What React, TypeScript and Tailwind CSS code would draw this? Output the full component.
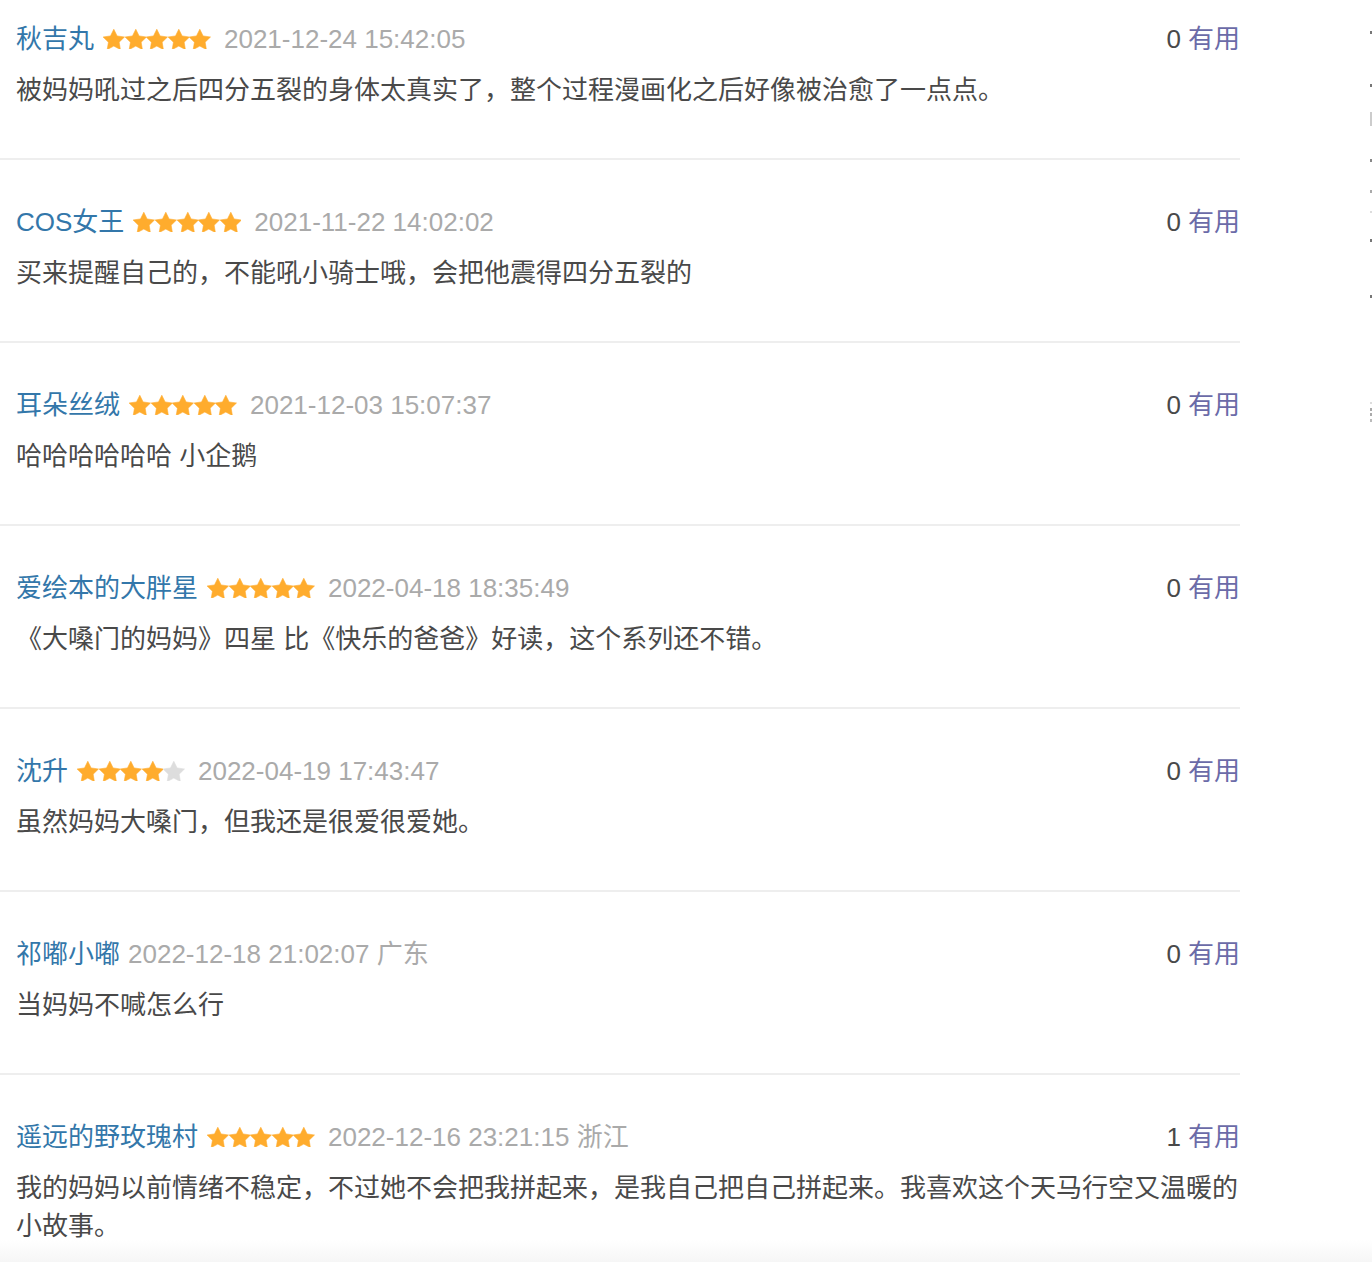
import React from "react";

type Review = {
  name: string;
  stars: number | null;
  date: string;
  loc?: string;
  votes: number;
  text: string;
};

const reviews: Review[] = [
  { name: "秋吉丸", stars: 5, date: "2021-12-24 15:42:05", votes: 0, text: "被妈妈吼过之后四分五裂的身体太真实了，整个过程漫画化之后好像被治愈了一点点。" },
  { name: "COS女王", stars: 5, date: "2021-11-22 14:02:02", votes: 0, text: "买来提醒自己的，不能吼小骑士哦，会把他震得四分五裂的" },
  { name: "耳朵丝绒", stars: 5, date: "2021-12-03 15:07:37", votes: 0, text: "哈哈哈哈哈哈 小企鹅" },
  { name: "爱绘本的大胖星", stars: 5, date: "2022-04-18 18:35:49", votes: 0, text: "《大嗓门的妈妈》四星 比《快乐的爸爸》好读，这个系列还不错。" },
  { name: "沈升", stars: 4, date: "2022-04-19 17:43:47", votes: 0, text: "虽然妈妈大嗓门，但我还是很爱很爱她。" },
  { name: "祁嘟小嘟", stars: null, date: "2022-12-18 21:02:07", loc: "广东", votes: 0, text: "当妈妈不喊怎么行" },
  { name: "遥远的野玫瑰村", stars: 5, date: "2022-12-16 23:21:15", loc: "浙江", votes: 1, text: "我的妈妈以前情绪不稳定，不过她不会把我拼起来，是我自己把自己拼起来。我喜欢这个天马行空又温暖的小故事。" },
];

const Star = ({ on }: { on: boolean }) => (
  <svg width="21.6" height="20.7" viewBox="0.5 0 23 22" className="block">
    <path
      d="M12 0.2 L15.53 7.35 L23.41 8.49 L17.71 14.05 L19.05 21.91 L12 18.2 L4.95 21.91 L6.29 14.05 L0.59 8.49 L8.47 7.35 Z"
      fill={on ? "#ffac2d" : "#dddddd"}
      stroke={on ? "#ffac2d" : "#dddddd"}
      strokeWidth="0.6"
      strokeLinejoin="round"
    />
  </svg>
);

const Stars = ({ n }: { n: number }) => (
  <span className="ml-[9px] mr-[13px] flex items-center">
    {[0, 1, 2, 3, 4].map((i) => (
      <Star key={i} on={i < n} />
    ))}
  </span>
);

const Item = ({ r, first }: { r: Review; first: boolean }) => (
  <div className={`border-b-2 border-[#eeeeee] pl-[16px] pt-[44px] pb-[49px] ${first ? "-mt-[23px]" : ""}`}>
    <div className="flex h-[36px] items-center justify-between text-[26px] leading-[36px]">
      <div className="flex items-center">
        <span className="text-[#3377aa]">{r.name}</span>
        {r.stars !== null ? <Stars n={r.stars} /> : <span className="w-[8px]" />}
        <span className="text-[#aaaaaa]">
          {r.date}
          {r.loc ? ` ${r.loc}` : ""}
        </span>
      </div>
      <div className="flex items-center">
        <span className="text-[#494949]">{r.votes}</span>
        <span className="ml-[7px] text-[#6b6ba8]">有用</span>
      </div>
    </div>
    <p className="mt-[14px] text-[26px] leading-[38px] text-[#494949]">{r.text}</p>
  </div>
);

const specks: { top: number; h: number; c: string }[] = [
  { top: 31, h: 3, c: "#777777" },
  { top: 84, h: 3, c: "#777777" },
  { top: 112, h: 14, c: "#cccccc" },
  { top: 159, h: 3, c: "#888888" },
  { top: 190, h: 3, c: "#aaaaaa" },
  { top: 211, h: 2, c: "#dddddd" },
  { top: 239, h: 3, c: "#777777" },
  { top: 295, h: 3, c: "#777777" },
  { top: 402, h: 2, c: "#dddddd" },
  { top: 408, h: 3, c: "#aaaaaa" },
  { top: 413, h: 3, c: "#aaaaaa" },
  { top: 419, h: 3, c: "#bbbbbb" },
];

export default function App() {
  return (
    <div
      className="relative h-[1262px] w-[1372px] overflow-hidden bg-white"
      style={{ fontFamily: '"Liberation Sans", Helvetica, Arial, "Noto Sans CJK SC", sans-serif' }}
    >
      <div className="w-[1240px]">
        {reviews.map((r, i) => (
          <Item key={i} r={r} first={i === 0} />
        ))}
      </div>

      {/* clipped edge of a sidebar that lies beyond the window */}
      {specks.map((s, i) => (
        <div
          key={i}
          className="absolute left-[1370px] w-[2px]"
          style={{ top: s.top, height: s.h, backgroundColor: s.c }}
        />
      ))}

      <div className="absolute bottom-0 left-0 h-[22px] w-full bg-gradient-to-b from-white/0 to-[#f6f6f6]" />
    </div>
  );
}
